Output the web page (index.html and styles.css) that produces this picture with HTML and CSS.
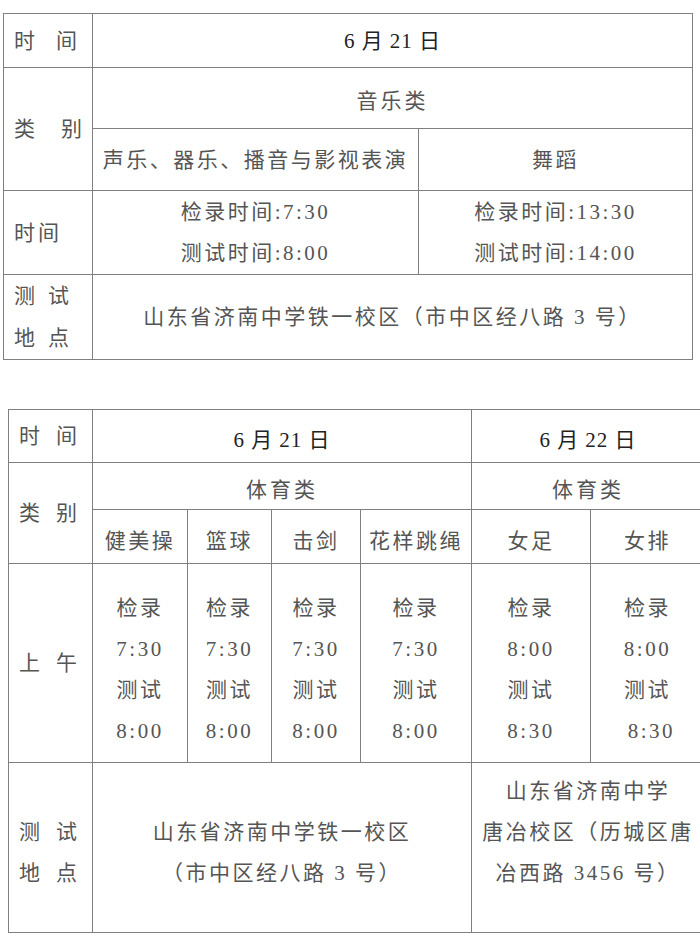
FILE: index.html
```html
<!DOCTYPE html>
<html lang="zh-CN">
<head>
<meta charset="utf-8">
<link rel="stylesheet" href="styles.css">
</head>
<body>
<table class="grid t1">
  <colgroup><col class="c89"><col class="c326"><col class="c274"></colgroup>
  <tr class="r54">
    <td class="lab"><span class="ls22">时</span>间</td>
    <td colspan="2" class="head">6 月 21 日</td>
  </tr>
  <tr class="r61">
    <td rowspan="2" class="lab"><span class="ls27">类</span>别</td>
    <td colspan="2" class="sub">音乐类</td>
  </tr>
  <tr class="r62">
    <td class="txt">声乐、器乐、播音与影视表演</td>
    <td class="txt">舞蹈</td>
  </tr>
  <tr class="r84">
    <td class="lab"><span class="ls4">时</span>间</td>
    <td class="txt lines">检录时间:7:30<br>测试时间:8:00</td>
    <td class="txt lines">检录时间:13:30<br>测试时间:14:00</td>
  </tr>
  <tr class="r85">
    <td class="lab lines44"><span class="ls14">测</span>试<br><span class="ls14">地</span>点</td>
    <td colspan="2" class="txt">山东省济南中学铁一校区（市中区经八路 3 号）</td>
  </tr>
</table>

<table class="grid t2">
  <colgroup><col class="c84"><col class="c95"><col class="c84b"><col class="c89b"><col class="c111"><col class="c119"><col class="c114"></colgroup>
  <tr class="r53">
    <td class="lab2"><span class="ls17">时</span>间</td>
    <td colspan="4" class="head low">6 月 21 日</td>
    <td colspan="2" class="head low">6 月 22 日</td>
  </tr>
  <tr class="r47">
    <td rowspan="2" class="lab2"><span class="ls17">类</span>别</td>
    <td colspan="4" class="sub low">体育类</td>
    <td colspan="2" class="sub low">体育类</td>
  </tr>
  <tr class="r54">
    <td class="txt low">健美操</td>
    <td class="txt low">篮球</td>
    <td class="txt low">击剑</td>
    <td class="txt low">花样跳绳</td>
    <td class="txt low">女足</td>
    <td class="txt low">女排</td>
  </tr>
  <tr class="r199">
    <td class="lab2"><span class="ls17">上</span>午</td>
    <td class="txt lines down">检录<br>7:30<br>测试<br>8:00</td>
    <td class="txt lines down">检录<br>7:30<br>测试<br>8:00</td>
    <td class="txt lines down">检录<br>7:30<br>测试<br>8:00</td>
    <td class="txt lines down">检录<br>7:30<br>测试<br>8:00</td>
    <td class="txt lines down">检录<br>8:00<br>测试<br>8:30</td>
    <td class="txt lines down">检录<br>8:00<br>测试<br>&nbsp;8:30</td>
  </tr>
  <tr class="r170">
    <td class="lab2 lines down2"><span class="ls17">测</span>试<br><span class="ls17">地</span>点</td>
    <td colspan="4" class="txt lines down2">山东省济南中学铁一校区<br>（市中区经八路 3 号）</td>
    <td colspan="2" class="txt lines up">山东省济南中学<br>唐冶校区（历城区唐<br>冶西路 3456 号）</td>
  </tr>
</table>
</body>
</html>
```

FILE: styles.css
```css
html, body {
  margin: 0;
  padding: 0;
  background: #ffffff;
  overflow: hidden;
}

body {
  width: 700px;
  height: 940px;
  font-family: "Liberation Serif", "Noto Sans CJK SC", serif;
  font-size: 21px;
  color: #555555;
}

.grid {
  border-collapse: collapse;
  table-layout: fixed;
}

.grid td {
  border: 1px solid #808080;
  padding: 0;
  vertical-align: middle;
  text-align: center;
  white-space: nowrap;
  line-height: 28px;
}

.t1 {
  width: 689px;
  margin: 13px 0 0 3px;
}

.t2 {
  width: 696px;
  margin: 49px 0 0 8px;
}

.c89 { width: 89px; }
.c326 { width: 326px; }
.c274 { width: 274px; }

.c84 { width: 84px; }
.c95 { width: 95px; }
.c84b { width: 84px; }
.c89b { width: 89px; }
.c111 { width: 111px; }
.c119 { width: 119px; }
.c114 { width: 114px; }

.r54 { height: 54px; }
.r61 { height: 61px; }
.r62 { height: 62px; }
.r84 { height: 84px; }
.r85 { height: 85px; }
.r53 { height: 53px; }
.r47 { height: 47px; }
.r199 { height: 199px; }
.r170 { height: 170px; }

.grid td.lab {
  text-align: left;
  padding-left: 10px;
}

.grid td.lab2 {
  text-align: left;
  padding-left: 10px;
}

.ls22 { letter-spacing: 21px; }
.ls27 { letter-spacing: 26px; }
.ls4 { letter-spacing: 3px; }
.ls14 { letter-spacing: 13px; }
.ls17 { letter-spacing: 16px; }

.head {
  color: #222222;
  letter-spacing: 1px;
}

.grid td.sub {
  letter-spacing: 3px;
  padding-top: 6px;
}

.txt {
  letter-spacing: 2.5px;
}

.grid td.lines {
  line-height: 41px;
}

.grid td.lines44 {
  line-height: 42px;
}

.grid td.low {
  padding-top: 8px;
}

.grid td.down {
  padding-top: 14px;
}

.grid td.down2 {
  padding-top: 10px;
}

.grid td.up {
  padding-bottom: 30px;
}
```
